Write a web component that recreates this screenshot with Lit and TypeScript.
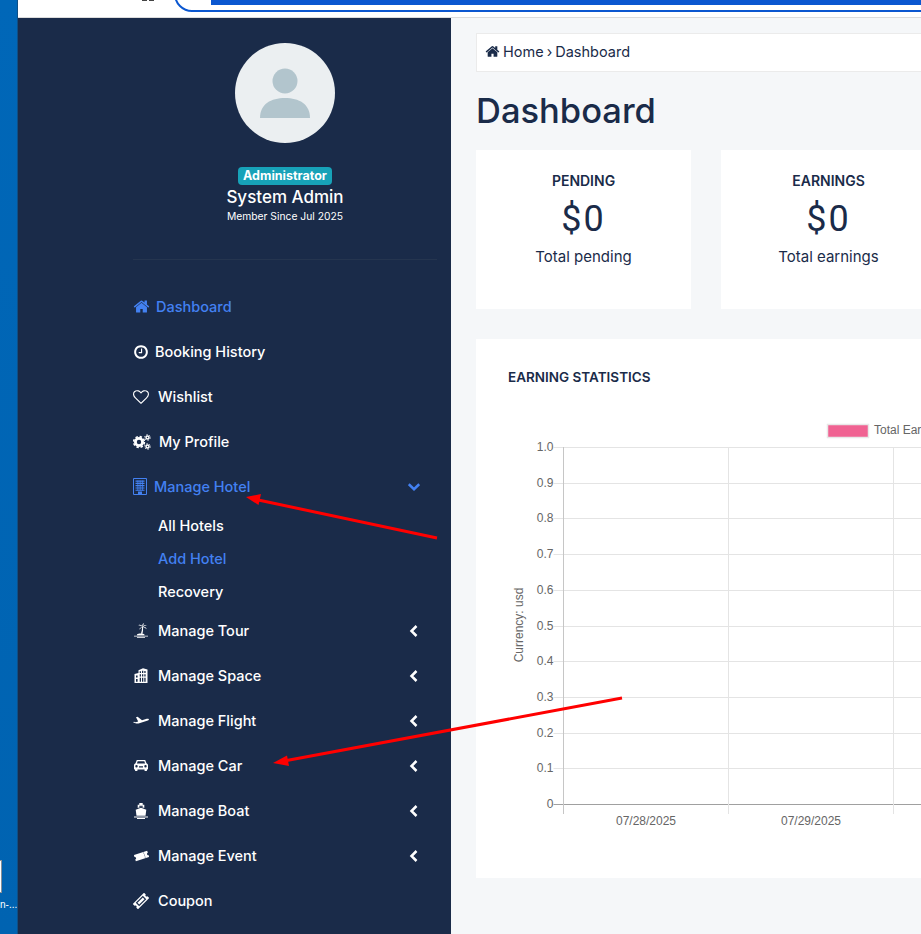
import { LitElement, html, css, svg } from "lit";
import { customElement } from "lit/decorators.js";

const fa = (d: string, size = 15) => html`<svg width=${size} height=${size} viewBox="0 0 1792 1792" fill="currentColor"><path d=${d}></path></svg>`;

const HOME = "M1472 992v480q0 26-19 45t-45 19h-384v-384h-256v384h-384q-26 0-45-19t-19-45v-480q0-1 .5-3t.5-3l575-474 575 474q1 2 1 6zm223-69l-62 74q-8 9-21 11h-3q-13 0-21-7l-692-577-692 577q-12 8-24 7-13-2-21-11l-62-74q-8-10-7-23.500t11-21.500l719-599q32-26 76-26t76 26l244 204v-195q0-14 9-23t23-9h192q14 0 23 9t9 23v408l219 182q10 8 11 21.500t-7 23.500z";
const CLOCK = "M1024 544v448q0 14-9 23t-23 9h-320q-14 0-23-9t-9-23v-64q0-14 9-23t23-9h224v-352q0-14 9-23t23-9h64q14 0 23 9t9 23zm416 352q0-148-73-273t-198-198-273-73-273 73-198 198-73 273 73 273 198 198 273 73 273-73 198-198 73-273zm224 0q0 209-103 385.500t-279.500 279.500-385.500 103-385.500-103-279.500-279.500-103-385.500 103-385.500 279.500-279.500 385.500-103 385.500 103 279.500 279.500 103 385.500z";
const HEART = "M1664 596q0-81-21.500-143t-55-98.500-81.500-59.500-94-31-98-8-112 25.500-110.500 64-86.500 72-60 61.500q-18 22-49 22t-49-22q-24-28-60-61.500t-86.500-72-110.500-64-112-25.500-98 8-94 31-81.500 59.500-55 98.500-21.500 143q0 168 187 355l581 560 580-559q188-188 188-356zm128 0q0 221-229 450l-623 600q-18 18-44 18t-44-18l-624-602q-10-8-27.500-26t-55.500-65.500-68-97.500-53.500-121-23.500-138q0-220 127-344t351-124q62 0 126.500 21.500t120 58 95.500 68.500 76 68q36-36 76-68t95.500-68.500 120-58 126.500-21.500q224 0 351 124t127 344z";

const cogs = html`<svg width="18" height="16" viewBox="0 0 18 16" fill="none" stroke="currentColor">
  <circle cx="6" cy="8" r="3.600" stroke-width="2.800"></circle>
  <circle cx="6" cy="8" r="5.400" stroke-width="1.600" stroke-dasharray="2.400 1.840"></circle>
  <circle cx="14.500" cy="3.500" r="1.500" stroke-width="1.500"></circle>
  <circle cx="14.500" cy="3.500" r="2.800" stroke-width="1" stroke-dasharray="1.300 1.630"></circle>
  <circle cx="14.500" cy="12.500" r="1.500" stroke-width="1.500"></circle>
  <circle cx="14.500" cy="12.500" r="2.800" stroke-width="1" stroke-dasharray="1.300 1.630"></circle>
</svg>`;

const hotel = html`<svg width="14" height="17" viewBox="0 0 14 17" fill="currentColor">
  <path d="M0.500 0.500h13v16h-13z" fill="none" stroke="currentColor"></path>
  <path d="M2.500 2.500h9v1.200h-9zM2.500 4.800h9V6h-9zM2.500 7.100h9v1.200h-9zM2.500 9.400h9v1.200h-9zM2.500 11.700h9v1h-9zM5 13.500h4V16H5z"></path>
  <path d="M4.500 2.500h.8v10h-.8zM6.700 2.500h.8v10h-.8zM8.900 2.500h.8v10h-.8z"></path>
</svg>`;

const palm = html`<svg class="in" width="14" height="15" viewBox="0 0 14 15" fill="currentColor">
  <path d="M8.500 4C7.800 2 6 1.300 4.300 2.300 6 2.300 7.300 3 8.500 4zM8.500 4C8 2.500 8.300 1 9.800 0 9.600 1.500 9.400 2.800 8.500 4zM8.500 4C9.300 2.400 11 1.800 12.800 2.500 11.200 2.800 9.800 3.200 8.500 4zM8.500 4C10.300 3.500 12 4.300 12.700 6.200 11.500 5 10 4.300 8.500 4zM8.500 4C7 4 5.600 4.900 5.200 6.700 6.200 5.500 7.300 4.700 8.500 4z"></path>
  <path d="M8.100 4h1c.1 2.300-.1 4.500-.6 6.800H6.900C7.700 8.700 8.100 6.400 8.100 4z"></path>
  <path d="M3 11.500c1.300-1.200 6-1.300 7.500 0v.7H3zM0 12.700h14v.8H0zM3 14.200h8v.8H3z"></path>
</svg>`;

const space = html`<svg class="in" width="14" height="15" viewBox="0 0 14 15">
  <path d="M0.500 6 4.500 5V2.200L9 .300 13.500 1.500V15H.500z" fill="currentColor"></path>
  <path d="M5.700 3.200h1.300V5H5.700zM8 2.800h1.300V5H8zM10.300 3h1.300v2h-1.300zM5.700 6.300h1.300v2.200H5.700zM8 6.300h1.300v2.200H8zM10.300 6.300h1.300v2.200h-1.300zM5.700 9.800h1.300v3.900H5.700zM8 9.800h1.300v3.900H8zM10.300 9.800h1.300v3.900h-1.300zM2 7.500h1.600v2H2zM2 11h1.600v2.700H2z" fill="#1a2b49"></path>
</svg>`;

const plane = html`<svg width="16" height="9" viewBox="0 0 16 9" fill="currentColor">
  <path d="M0 6.300 1 5.700l1.500.5 2.700-.8L3 1.200 4.600.800 9 4.300l4-1.300c1.200-.3 2.600-.2 2.900.2.300.5-.6 1.100-1.800 1.500L5.500 7.400c-1 .3-2 .3-3-.1z"></path>
</svg>`;

const car = html`<svg class="in" width="14" height="11" viewBox="0 0 14 11" fill="currentColor">
  <path fill-rule="evenodd" d="M2.800 0h8.400l1.300 3.300 1 .7c.3.300.5.700.5 1.200V9c0 .3-.2.500-.5.500H13V10.500c0 .3-.2.500-.5.500h-1.500c-.3 0-.5-.2-.5-.5v-1h-7v1c0 .3-.2.500-.5.500H1.500c-.3 0-.5-.2-.5-.5V9.500H.500C.200 9.500 0 9.300 0 9V5.200C0 4.700.200 4.300.500 4l1-.7zM3.700 1.300 2.900 3.500h8.200l-.8-2.200zM2.500 5a1.200 1.200 0 0 0 0 2.400A1.200 1.200 0 0 0 2.500 5zm9 0a1.200 1.200 0 0 0 0 2.400 1.200 1.200 0 0 0 0-2.400zM5 6.300v1.200h4V6.300z"></path>
</svg>`;

const ship = html`<svg class="in" width="14" height="16" viewBox="0 0 14 16" fill="currentColor">
  <path fill-rule="evenodd" d="M5.300 0h3.400v1.800h1.600v3.100L7 3.700 3.700 4.900V1.800h1.600zM5.200 2.800v.9h3.600v-.9z"></path>
  <path d="M7 4.700 12.300 6.700 11.500 12.800H2.500L1.700 6.700z"></path>
  <path d="M0 13.600h14v.9H0zM3 15.100h8v.9H3z"></path>
</svg>`;

const ticket = html`<svg class="in" width="15" height="12" viewBox="0 0 15 12" fill="currentColor">
  <g transform="rotate(-18 7.500 6)">
    <path d="M.500 2.800h14v2.100a1.200 1.200 0 0 0 0 2.400v2H.500v-2a1.200 1.200 0 0 0 0-2.400z"></path>
    <path d="M10.300 3.300h.6v1.200h-.6zM10.300 5.400h.6v1.200h-.6zM10.300 7.500h.6v1.200h-.6z" fill="#1a2b49"></path>
  </g>
</svg>`;

const coupon = html`<svg width="16" height="16" viewBox="0 0 16 16" fill="currentColor">
  <g transform="rotate(-45 8 8)">
    <path d="M0 4.300H16V6.800a1.200 1.200 0 0 0 0 2.400V11.700H0V9.200a1.200 1.200 0 0 0 0-2.400z"></path>
    <path d="M3 5.600h10v4.800H3z" fill="#1a2b49"></path>
    <path d="M4.200 6.800h7.600v2.400H4.200z"></path>
  </g>
</svg>`;

type NavItem = { label: string; icon: unknown; textAt: number; active?: boolean; chevron?: "left" | "down" };

const topNav: NavItem[] = [
  { label: "Dashboard", icon: fa(HOME, 17), textAt: 23, active: true },
  { label: "Booking History", icon: fa(CLOCK, 16), textAt: 22 },
  { label: "Wishlist", icon: fa(HEART, 16), textAt: 25 },
  { label: "My Profile", icon: cogs, textAt: 26 },
  { label: "Manage Hotel", icon: hotel, textAt: 21, active: true, chevron: "down" },
];

const subNav = [
  { label: "All Hotels" },
  { label: "Add Hotel", active: true },
  { label: "Recovery" },
];

const bottomNav: NavItem[] = [
  { label: "Manage Tour", icon: palm, textAt: 25, chevron: "left" },
  { label: "Manage Space", icon: space, textAt: 25, chevron: "left" },
  { label: "Manage Flight", icon: plane, textAt: 25, chevron: "left" },
  { label: "Manage Car", icon: car, textAt: 25, chevron: "left" },
  { label: "Manage Boat", icon: ship, textAt: 25, chevron: "left" },
  { label: "Manage Event", icon: ticket, textAt: 25, chevron: "left" },
  { label: "Coupon", icon: coupon, textAt: 25 },
];

const chartRows = ["1.0", "0.9", "0.8", "0.7", "0.6", "0.5", "0.4", "0.3", "0.2", "0.1", "0"];

@customElement("earning-chart")
class EarningChart extends LitElement {
  static styles = css`
    :host {
      display: block;
    }
    svg {
      display: block;
      font-family: "Liberation Sans", Arial, sans-serif;
      font-size: 12px;
    }
    text {
      fill: #666;
    }
  `;

  render() {
    // origin is the card's content box: x 508, y 415
    const left = 55.5;
    const top = 32;
    const step = 35.7;
    return html`<svg width="560" height="420" viewBox="0 0 560 420">
      <rect x="319.500" y="9.500" width="41" height="13" fill="#f06292" stroke="#e8e8e8" stroke-width="1.500"></rect>
      <text x="366" y="19">Total Earnings</text>
      <text transform="translate(15 210) rotate(-90)" text-anchor="middle">Currency: usd</text>
      ${chartRows.map((label, i) => {
        const row = Math.round(top + i * step);
        const last = i === chartRows.length - 1;
        return svg`
          <line x1=${left - 10} x2="560" y1=${row + 0.5} y2=${row + 0.5} stroke=${last ? "#a0a0a0" : "#e4e4e4"}></line>
          <text x=${left - 10} y=${row + 4} text-anchor="end">${label}</text>`;
      })}
      <line x1=${left} x2=${left} y1=${top} y2="399" stroke="#c6c6c6"></line>
      <line x1=${left + 165} x2=${left + 165} y1=${top} y2="399" stroke="#e4e4e4"></line>
      <line x1=${left + 330} x2=${left + 330} y1=${top} y2="399" stroke="#e4e4e4"></line>
      <text x=${left + 82.5} y="410" text-anchor="middle">07/28/2025</text>
      <text x=${left + 247.5} y="410" text-anchor="middle">07/29/2025</text>
    </svg>`;
  }
}

@customElement("app-root")
class AppRoot extends LitElement {
  static styles = css`
    :host {
      display: block;
      position: relative;
      width: 921px;
      height: 934px;
      overflow: hidden;
      background: #0063b1;
      font-family: Inter, "Liberation Sans", sans-serif;
    }
    .desktop {
      position: absolute;
      left: 0;
      top: 0;
      width: 17px;
      height: 934px;
      overflow: hidden;
      background: linear-gradient(180deg, #0067b8 0%, #0063b1 100%);
      border-right: 1px solid #0f4f85;
      box-sizing: content-box;
    }
    .desktop .tile {
      position: absolute;
      left: -20px;
      top: 860px;
      width: 20px;
      height: 31px;
      border: 1px solid #8a8f96;
      background: #fff;
    }
    .desktop .cap {
      position: absolute;
      left: 0;
      top: 899px;
      color: #fff;
      font: 10px "Liberation Sans", sans-serif;
      white-space: nowrap;
    }
    .browser {
      margin-left: 18px;
      display: flex;
      flex-direction: column;
      height: 934px;
    }
    .chrome {
      position: relative;
      height: 17px;
      flex: none;
      background: #fff;
      border-bottom: 1px solid #dcdcdc;
      overflow: hidden;
    }
    .chrome .dots {
      position: absolute;
      left: 124px;
      top: -2px;
      width: 12px;
      height: 3px;
      background: linear-gradient(90deg, #444 0 5px, transparent 5px 7px, #444 7px);
    }
    .chrome .omni {
      position: absolute;
      left: 156px;
      top: -31px;
      width: 900px;
      height: 39px;
      border: 2px solid #0b57d0;
      border-radius: 18px;
    }
    .chrome .select {
      position: absolute;
      left: 193px;
      top: 0;
      width: 720px;
      height: 5px;
      background: #0b57d0;
    }
    .page {
      flex: 1;
      display: flex;
      min-height: 0;
    }
    .side {
      width: 433px;
      flex: none;
      box-sizing: border-box;
      background: #1a2b49;
      padding: 25px 14px 0 115px;
      color: #fff;
    }
    .profile {
      display: flex;
      flex-direction: column;
      align-items: center;
      height: 217px;
      box-sizing: border-box;
      border-bottom: 1px solid #25354f;
    }
    .avatar {
      width: 100px;
      height: 100px;
      border-radius: 50%;
      background: #ebeff1;
      display: flex;
      align-items: center;
      justify-content: center;
      margin-bottom: 24px;
    }
    .badge {
      background: #17a2b8;
      border-radius: 4px;
      font-size: 12.500px;
      font-weight: 700;
      line-height: 18px;
      padding: 0 5px;
    }
    .name {
      font-size: 17px;
      font-weight: 500;
      line-height: 24px;
    }
    .since {
      font-size: 10.300px;
      line-height: 14px;
    }
    nav {
      margin-top: 24px;
    }
    .row {
      display: flex;
      align-items: center;
      height: 45px;
      position: relative;
      font-size: 14.500px;
      font-weight: 500;
      color: #fff;
    }
    .row.active,
    .sub.active {
      color: #4381f2;
    }
    .row .ico {
      position: absolute;
      left: 0;
      top: 0;
      height: 100%;
      display: flex;
      align-items: center;
    }
    .row .ico .in {
      margin-left: 1px;
    }
    .row .chev {
      position: absolute;
      right: 17px;
      top: 50%;
      transform: translateY(-50%);
      display: flex;
    }
    .subs {
      padding-left: 25px;
    }
    .sub {
      height: 33px;
      display: flex;
      align-items: center;
      font-size: 14.500px;
      font-weight: 500;
      color: #fff;
    }
    main {
      flex: 1;
      background: #f5f7f9;
      padding: 15px 0 0 25px;
      overflow: hidden;
      color: #1a2b49;
    }
    .inner {
      width: 640px;
    }
    .crumb {
      height: 39px;
      box-sizing: border-box;
      background: #fff;
      border: 1px solid #ebebeb;
      display: flex;
      align-items: center;
      gap: 3px;
      padding: 0 0 2px 8px;
      font-size: 14.500px;
    }
    .crumb .home {
      display: flex;
      color: #1a2b49;
    }
    h1 {
      margin: 18px 0 18px;
      font-size: 34.500px;
      font-weight: 500;
      line-height: 42px;
    }
    .stats {
      display: grid;
      grid-template-columns: 215px 215px;
      gap: 30px;
      margin-bottom: 30px;
    }
    .stat {
      height: 159px;
      box-sizing: border-box;
      background: #fff;
      text-align: center;
      padding-top: 21px;
    }
    .stat h3 {
      margin: 0;
      font-size: 14px;
      font-weight: 600;
      line-height: 20px;
    }
    .stat .num {
      font-family: Roboto, sans-serif;
      font-size: 36px;
      letter-spacing: 2px;
      line-height: 44px;
      margin-top: 6px;
    }
    .stat p {
      margin: 5px 0 0;
      font-size: 15px;
      line-height: 22px;
    }
    .panel {
      height: 539px;
      box-sizing: border-box;
      background: #fff;
      padding: 28px 0 0 32px;
    }
    .panel h2 {
      margin: 0 0 28px;
      font-size: 13.500px;
      font-weight: 600;
      line-height: 20px;
    }
    .marks {
      position: absolute;
      left: 0;
      top: 0;
      pointer-events: none;
    }
  `;

  private navRow(item: NavItem) {
    return html`<div class="row ${item.active ? "active" : ""}" style="padding-left:${item.textAt}px">
      <span class="ico">${item.icon}</span>
      <span>${item.label}</span>
      ${item.chevron
        ? html`<span class="chev">
            <svg width="12" height="12" viewBox="0 0 12 12" fill="none" stroke="currentColor" stroke-width="2.500">
              ${item.chevron === "down"
                ? svg`<path d="M.800 3.200 6 8.200l5.200-5"></path>`
                : svg`<path d="M8.500 1 3.500 6l5 5"></path>`}
            </svg>
          </span>`
        : ""}
    </div>`;
  }

  render() {
    return html`
      <div class="desktop">
        <div class="tile"></div>
        <div class="cap">n-...</div>
      </div>
      <div class="browser">
        <div class="chrome">
          <div class="dots"></div>
          <div class="omni"></div>
          <div class="select"></div>
        </div>
        <div class="page">
          <aside class="side">
            <div class="profile">
              <div class="avatar">
                <svg width="52" height="52" viewBox="0 0 52 52" fill="#b2c5cd">
                  <circle cx="26" cy="14" r="12.500"></circle>
                  <path d="M1 51c0-14 11-20 25-20s25 6 25 20z"></path>
                </svg>
              </div>
              <span class="badge">Administrator</span>
              <div class="name">System Admin</div>
              <div class="since">Member Since Jul 2025</div>
            </div>
            <nav>
              ${topNav.map((item) => this.navRow(item))}
              <div class="subs">
                ${subNav.map((s) => html`<div class="sub ${s.active ? "active" : ""}">${s.label}</div>`)}
              </div>
              ${bottomNav.map((item) => this.navRow(item))}
            </nav>
          </aside>
          <main>
            <div class="inner">
              <div class="crumb">
                <span class="home">${fa(HOME, 15)}</span>
                <span>Home</span>
                <span>›</span>
                <span>Dashboard</span>
              </div>
              <h1>Dashboard</h1>
              <div class="stats">
                <div class="stat">
                  <h3>PENDING</h3>
                  <div class="num">$0</div>
                  <p>Total pending</p>
                </div>
                <div class="stat">
                  <h3>EARNINGS</h3>
                  <div class="num">$0</div>
                  <p>Total earnings</p>
                </div>
              </div>
              <section class="panel">
                <h2>EARNING STATISTICS</h2>
                <earning-chart></earning-chart>
              </section>
            </div>
          </main>
        </div>
      </div>
      <svg class="marks" width="921" height="934" viewBox="0 0 921 934">
        <path d="M437 538 256 499.500" stroke="#f00" stroke-width="3" fill="none"></path>
        <path d="M246 497 261 494 258.500 505z" fill="#f00"></path>
        <path d="M622 698 284 761" stroke="#f00" stroke-width="3" fill="none"></path>
        <path d="M273 763 287 755.500 289 766z" fill="#f00"></path>
      </svg>
    `;
  }
}
